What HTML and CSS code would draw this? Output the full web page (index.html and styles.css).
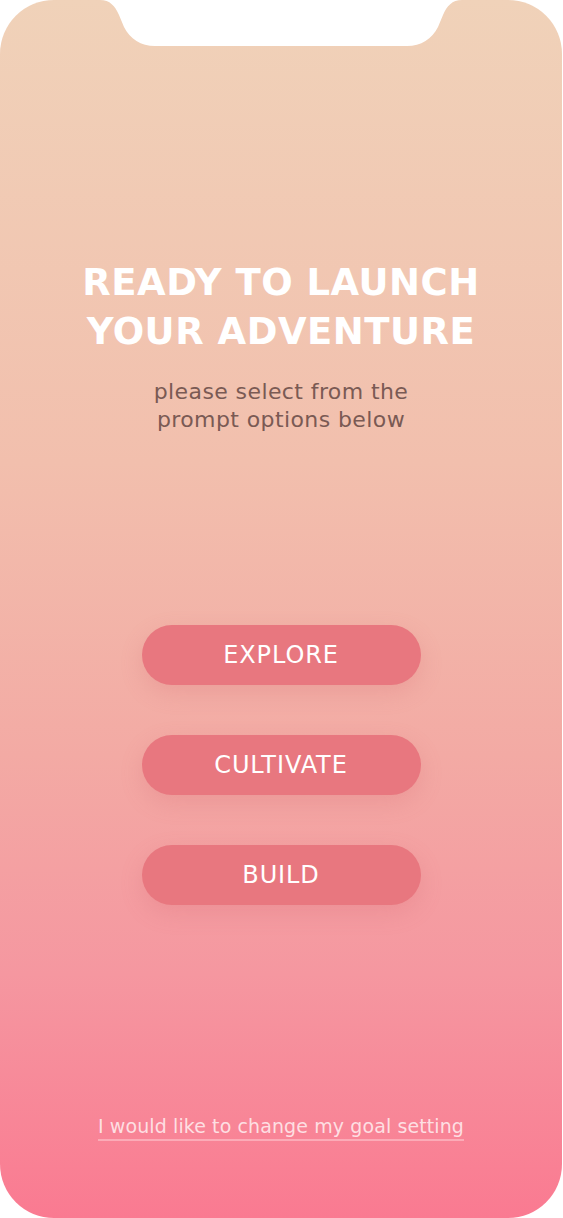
FILE: index.html
```html
<!DOCTYPE html>
<html>
<head>
<meta charset="utf-8">
<link rel="stylesheet" href="styles.css">
</head>
<body>
<div class="phone">
  <svg class="notch" width="362" height="46" viewBox="0 0 362 46"><path d="M0,0 C10,0 15,6 19,15 L24,27 C30,39 41,46 55,46 L307,46 C321,46 332,39 338,27 L343,15 C347,6 352,0 362,0 Z" fill="#fff"/></svg>
  <h1 class="title">READY TO LAUNCH<br>YOUR ADVENTURE</h1>
  <p class="subtitle">please select from the<br>prompt options below</p>
  <div class="actions">
    <button class="btn">EXPLORE</button>
    <button class="btn">CULTIVATE</button>
    <button class="btn">BUILD</button>
  </div>
  <a class="link" href="#">I would like to change my goal setting</a>
</div>
</body>
</html>
```
FILE: styles.css
```css
html, body { margin: 0; padding: 0; background: #fff; }
body { width: 563px; height: 1218px; overflow: hidden; }
.phone {
  position: relative;
  width: 562px;
  height: 1218px;
  border-radius: 54px;
  background: linear-gradient(180deg, #f0d2b9 0%, #f2bfad 38%, #f3aaa4 62%, #f597a0 80%, #fa7a91 100%);
  display: flex;
  flex-direction: column;
  align-items: center;
  font-family: "DejaVu Sans", sans-serif;
}
.notch { position: absolute; top: 0; left: 100px; }
.title {
  margin: 258px 0 0;
  font-size: 37px;
  line-height: 49px;
  font-weight: 700;
  color: #fff;
  text-align: center;
  letter-spacing: 0.5px;
}
.subtitle {
  margin: 22px 0 0;
  font-size: 22px;
  line-height: 28px;
  color: #7a5a54;
  text-align: center;
  letter-spacing: 0.4px;
}
.actions {
  margin-top: 191px;
  display: flex;
  flex-direction: column;
  gap: 50px;
}
.btn {
  width: 279px;
  height: 60px;
  border: none;
  border-radius: 30px;
  background: #e8777f;
  color: #fff;
  font-family: inherit;
  font-size: 24px;
  letter-spacing: 0.9px;
  box-shadow: 0 8px 22px rgba(210, 100, 110, 0.22);
}
.link {
  margin-top: 210px;
  font-size: 19px;
  letter-spacing: 0.1px;
  color: rgba(255, 240, 242, 0.85);
  text-decoration: none;
  border-bottom: 2px solid rgba(255, 220, 225, 0.45);
  padding-bottom: 2px;
}
```
